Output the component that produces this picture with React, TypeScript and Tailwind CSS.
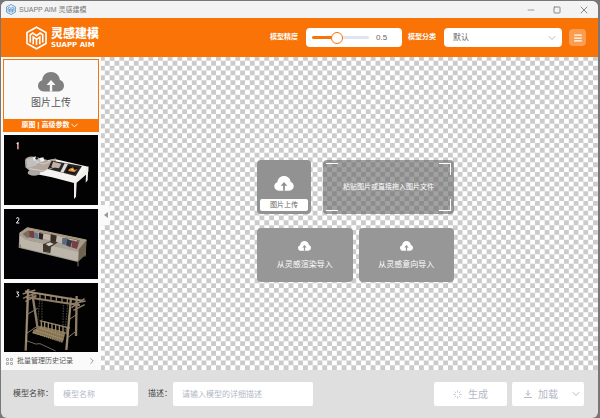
import React from "react";
import { ChevronDown, ChevronRight, Minus, Square, X, Menu } from "lucide-react";

function Cloud({ className, arrow }: { className: string; arrow: string }) {
  return (
    <svg viewBox="0 0 26 20" className={className} aria-hidden="true">
      <path
        d="M6 19.5C2.6 19.5 0 17 0 13.8c0-2.700 1.700-4.800 4.200-5.500C4.400 3.500 8.200 0 13 0c4.700 0 8.500 3.400 8.900 8 2.400.7 4.100 2.900 4.100 5.700 0 3.300-2.600 5.800-6 5.800z"
        fill="currentColor"
      />
      <path d="M13 8l4.500 5h-3.300v6.500h-2.400V13H8.500z" fill={arrow} />
    </svg>
  );
}

function Emblem({ className }: { className: string }) {
  return (
    <svg viewBox="0 0 64 72" className={className} fill="none" stroke="currentColor" strokeWidth="5" aria-hidden="true">
      <path d="M32 3L61 19v34L32 69 3 53V19z" />
      <path d="M13 50V26l8-5 11 8 11-8 8 5v24" />
      <path d="M22 55V33l10 7 10-7v22M32 40v17" />
    </svg>
  );
}

function DayBed() {
  return (
    <svg viewBox="12 3 282 210" className="block w-full" role="img" aria-label="1">
      <rect x="12" y="3" width="282" height="210" fill="#020203" />
      <path d="M50 29l4-2v19" stroke="#f4f4f4" strokeWidth="4" fill="none" />
      <path d="M56 29v17" stroke="#c8312a" strokeWidth="2" />
      <path d="M76 88l20 30 60 12 66 17 43-34v-15l-101-23z" fill="#f5f4f1" />
      <path d="M222 142l43-45-2 42-6 7 1-24-28 24-2 42-6 7z" fill="#efeeeb" />
      <ellipse cx="102" cy="116" rx="19" ry="9" fill="#aaa9a6" />
      <path d="M75 78q4-13 28-10l40 10 14 19-28 17-37-1-16-13z" fill="#aaa6a1" />
      <path d="M80 76l25-7 20 5-20 25-23 2z" fill="#c1c0be" />
      <path d="M84 103l32-12 51-18 2 19-36 16-29 3z" fill="#b4a69b" />
      <path d="M155 80l91 16-19 30-84-21z" fill="#282726" />
      <path d="M159 83l25 6-7 14-23-4z" fill="#c4b0a4" />
      <path d="M194 88l10 2-14 26-9-2z" fill="#deddda" />
      <path d="M204 96l32 5-12 18-27-5z" fill="#130e11" />
      <path d="M207 105l12-5 5 8 9-4-9 11-20-4z" fill="#d98935" />
      <path d="M210 107l9-3 2 6z" fill="#f7d77b" />
      <path d="M98 71l9-4 5 10-10 3zM119 72l11-2 4 11-12 3z" fill="#eeeeed" />
      <circle cx="110" cy="73" r="4" fill="#272321" />
      <path d="M88 104l45 7 31-12M106 82l25 8 20-8" stroke="#e6e3df" strokeWidth="2" fill="none" />
    </svg>
  );
}

function Sofa() {
  return (
    <svg viewBox="12 9 282 210" className="block w-full" role="img" aria-label="2">
      <rect x="12" y="9" width="282" height="210" fill="#020204" />
      <path d="M49 38q1-4 5-3 5 2 2 7l-7 9h9" stroke="#f4f4f4" strokeWidth="3" fill="none" />
      <path d="M58 82l24-17 177 37-2 43-24 23-177-43z" fill="#a39b8e" />
      <path d="M68 83l20-12 152 30-10 28-136-22z" fill="#776c60" />
      <path d="M88 72l30 7v24l-27-6zM122 80l29 6v24l-30-6zM169 88l30 7v23l-31-7zM203 97l27 6v24l-29-7z" fill="#c3b7a9" />
      <path d="M59 88l19 13 156 33v31L60 123z" fill="#bbb5aa" />
      <path d="M70 99l30-8 134 32v15z" fill="#a9a196" />
      <path d="M58 82l24-17 177 37-22 28 20-25-174-36-22 17" fill="none" stroke="#ad9d83" strokeWidth="3" />
      <path d="M87 74l16 2-1 21-13-3z" fill="#773e3b" />
      <path d="M102 79l13 1-1 18-12-2z" fill="#64798a" />
      <path d="M117 81l13 2-2 18-12-3z" fill="#252525" />
      <path d="M187 95l13 2-3 20-11-3z" fill="#526b82" />
      <path d="M201 99l16 5-6 20-13-6z" fill="#353c46" />
      <path d="M217 103l19 6-5 20-17-5z" fill="#793d45" />
      <path d="M153 85l17 4-3 20-15-4z" fill="#352d26" />
      <path d="M129 115l25-11 20 5-21 14-2 19-22-5z" fill="#40362e" />
      <path d="M137 114l13-5 11 5-14 7z" fill="#d4cec1" />
      <path d="M237 130l22-27-1 42-23 21z" fill="#6e6452" />
      <path d="M61 116v9M144 136v8M234 163v18M255 142v10" stroke="#806f5b" strokeWidth="3" />
    </svg>
  );
}

function Swing() {
  return (
    <svg viewBox="12 9 282 207" className="block w-full" role="img" aria-label="3">
      <rect x="12" y="9" width="282" height="207" fill="#020203" />
      <path d="M49 36h7l-4 6q6 0 4 6-2 4-7 2" stroke="#ededed" strokeWidth="3" fill="none" />
      <g stroke="#8d7d66" fill="none">
        <path d="M85 27l-8 185M97 42l18 116M230 48l-2 120M213 53l-14 157" strokeWidth="7" />
        <path d="M75 34l174 28M77 51l163 25" strokeWidth="6" />
        <path d="M68 42l38-12M69 55l39-17M76 65l34-18M215 83l39-27M207 73l50-10M220 91l34-17" strokeWidth="4" />
        <path d="M105 38v17M120 40v20M136 43v19M153 46v17M169 49v18M186 51v18M202 54v18" strokeWidth="4" />
        <path d="M80 160l30-20M202 174l27-21M80 104l33-19M207 119l25-17" strokeWidth="3" />
        <path d="M119 122l91 22M112 139l85 20" strokeWidth="4" />
      </g>
      <path d="M99 151l24-13 74 18-8 29-91-25z" fill="#857353" />
      <path d="M98 157l91 30M107 151l83 27M119 144l74 24" stroke="#a59370" strokeWidth="4" strokeDasharray="4 2" />
      <path d="M124 122v23M134 124v24M145 127v24M156 129v24M167 132v24M178 135v24M189 138v24M201 141v23" stroke="#9a8968" strokeWidth="4" />
      <path d="M119 60l-8 91M126 60v78M190 75l-2 103M203 75l-8 80" stroke="#776f61" strokeWidth="2" strokeDasharray="5 3" />
      <path d="M77 181l30 11 13-1 47 22" stroke="#a49b87" strokeWidth="2" fill="none" />
      <path d="M82 29l-3 160M210 79l-10 126M77 35l163 27" stroke="#b09c7d" strokeWidth="2" fill="none" />
    </svg>
  );
}

function Checker() {
  return (
    <svg className="absolute inset-0 h-full w-full" aria-hidden="true">
      <defs>
        <pattern id="checker" x="-1" y="-1" width="29" height="29" patternUnits="userSpaceOnUse" viewBox="0 0 6 6">
          <rect width="6" height="6" fill="#fff" />
          <path
            fill="#cbcbcb"
            d="M0 0h1v1H0zM2 0h1v1H2zM4 0h1v1H4zM1 1h1v1H1zM3 1h1v1H3zM5 1h1v1H5zM0 2h1v1H0zM2 2h1v1H2zM4 2h1v1H4zM1 3h1v1H1zM3 3h1v1H3zM5 3h1v1H5zM0 4h1v1H0zM2 4h1v1H2zM4 4h1v1H4zM1 5h1v1H1zM3 5h1v1H3zM5 5h1v1H5z"
          />
        </pattern>
      </defs>
      <rect width="100%" height="100%" fill="url(#checker)" />
    </svg>
  );
}

function ImportCard({ text }: { text: string }) {
  return (
    <button className="flex h-[54px] flex-1 flex-col items-center justify-center gap-1.5 rounded bg-[#979797] pt-1 text-[8px] text-white">
      <Cloud className="h-[10px] w-[13px]" arrow="#979797" />
      <span className="leading-4">{text}</span>
    </button>
  );
}

export default function App() {
  return (
    <div className="flex min-h-screen flex-col bg-[#777] pt-px pr-0.5 pl-px font-['Liberation_Sans','Noto_Sans_CJK_SC',sans-serif]">
      <div className="flex flex-1 flex-col overflow-hidden rounded-md bg-[#dfdfdf]">
        <div className="flex h-[17px] items-center bg-[#f3f3f3] pr-2 pl-[5px] text-[#777]">
          <Emblem className="h-[11px] w-[10px] text-[#4388c7]" />
          <h1 className="ml-[3px] flex-1 text-[7px] leading-4">SUAPP AIM 灵感建模</h1>
          <div className="flex items-center gap-[17px] text-[#888]">
            <button aria-label="最小化"><Minus size={10} strokeWidth={2} /></button>
            <button aria-label="最大化"><Square size={8} strokeWidth={3} /></button>
            <button aria-label="关闭"><X size={12} strokeWidth={2} /></button>
          </div>
        </div>

        <header className="flex h-[39px] items-center bg-[#f97306] pr-3 pl-[25px] text-white">
          <Emblem className="h-6 w-[21px]" />
          <div className="ml-1 flex-1">
            <div className="text-[12px] leading-[14px] font-black">灵感建模</div>
            <div className="font-['DejaVu_Sans',sans-serif] text-[7px] leading-[8px] font-bold">SUAPP AIM</div>
          </div>
          <label htmlFor="precision" className="text-[7px] font-bold">模型精度</label>
          <div className="ml-2 flex h-[19px] w-24 items-center rounded-sm bg-white pl-1.5 text-[#666]">
            <input
              id="precision"
              type="range"
              min="0"
              max="1"
              step="0.01"
              defaultValue="0.43"
              className="h-[3px] w-[57px] appearance-none rounded-full bg-[linear-gradient(to_right,#f97306_44%,#e2e5ee_44%)] [&::-webkit-slider-thumb]:size-3 [&::-webkit-slider-thumb]:appearance-none [&::-webkit-slider-thumb]:rounded-full [&::-webkit-slider-thumb]:border [&::-webkit-slider-thumb]:border-[#f97306] [&::-webkit-slider-thumb]:bg-white"
            />
            <output htmlFor="precision" className="ml-[7px] text-[8px]">0.5</output>
          </div>
          <label htmlFor="category" className="ml-1.5 text-[7px] font-bold">模型分类</label>
          <div className="relative ml-2">
            <select id="category" className="block h-[19px] w-[118px] appearance-none rounded-sm bg-white pl-[9px] text-[8px] text-[#666]">
              <option>默认</option>
            </select>
            <ChevronDown size={12} strokeWidth={2} className="pointer-events-none absolute top-1 right-1 text-[#b4b8c2]" />
          </div>
          <button aria-label="菜单" className="ml-[7px] flex size-[17px] items-center justify-center rounded-sm bg-[#fb9d50]">
            <Menu size={10} strokeWidth={3} />
          </button>
        </header>

        <div className="flex flex-1">
          <aside className="flex w-[100px] shrink-0 flex-col bg-[#fafafa] px-0.5 pt-0.5">
            <section className="flex h-[73px] flex-col border border-[#f97306] bg-[#fafafa]">
              <button className="flex flex-1 flex-col items-center pt-3 text-[10px] text-[#555]">
                <Cloud className="h-5 w-[26px] text-[#808080]" arrow="#fafafa" />
                <span className="mt-1 leading-[14px]">图片上传</span>
              </button>
              <button className="flex h-3 items-center justify-center bg-[#f97306] text-[7px] font-bold text-white">
                原图 | 高级参数
                <ChevronDown size={11} />
              </button>
            </section>
            <div className="mt-[3px] flex flex-col gap-1 px-px">
              <DayBed />
              <Sofa />
              <Swing />
            </div>
            <button className="flex flex-1 items-center pr-0.5 pl-[3px] text-[7px] text-[#555]">
              <svg viewBox="0 0 7 7" className="mr-1 size-[7px]" fill="none" stroke="#aaa" aria-hidden="true">
                <path d="M.5.5h2v2h-2zM4.500.5h2v2h-2zM.5 4.500h2v2h-2zM4.500 4.500h2v2h-2z" />
              </svg>
              批量管理历史记录
              <ChevronRight size={10} className="ml-auto text-[#888]" />
            </button>
          </aside>

          <main className="relative flex flex-1 items-center justify-center pt-[15px] pl-3">
            <Checker />
            <button aria-label="收起侧栏" className="absolute top-[148px] left-0 flex h-5 w-[9px] items-center justify-center rounded-r-sm bg-[#fafafa] text-[#999]">
              <svg viewBox="0 0 4 6" className="h-1.5 w-1" aria-hidden="true"><path d="M4 0v6L0 3z" fill="currentColor" /></svg>
            </button>
            <div className="relative flex w-[197px] flex-col gap-3.5">
              <div className="flex justify-between">
                <button className="flex size-[54px] flex-col items-center justify-between rounded bg-[#929292] px-[3px] pt-4 pb-[3px] text-white">
                  <Cloud className="h-[15px] w-5" arrow="#929292" />
                  <span className="w-full rounded-xs bg-white text-[7px] leading-3 text-[#666]">图片上传</span>
                </button>
                <div className="relative flex h-[54px] w-[131px] items-center justify-center rounded bg-[#646464]/60 text-[7px] text-white">
                  <span className="absolute top-[3px] left-[3px] size-3 border-t border-white" />
                  <span className="absolute top-[3px] right-[3px] size-3 border-t border-r border-white" />
                  <span className="absolute bottom-[3px] left-[3px] size-3 border-b border-white" />
                  <span className="absolute right-[3px] bottom-[3px] size-3 border-r border-b border-white" />
                  粘贴图片或直接拖入图片文件
                </div>
              </div>
              <div className="flex gap-1.5">
                <ImportCard text="从灵感渲染导入" />
                <ImportCard text="从灵感意向导入" />
              </div>
            </div>
          </main>
        </div>

        <footer className="flex h-12 items-center pr-3.5 pl-3 text-[8px] text-[#444]">
          <label htmlFor="name" className="w-[41px] whitespace-nowrap">模型名称：</label>
          <input id="name" placeholder="模型名称" className="h-6 w-[84px] rounded-xs bg-white px-[9px] placeholder:text-[#b3b8c6]" />
          <label htmlFor="desc" className="ml-2.5 w-[25px] whitespace-nowrap">描述：</label>
          <input id="desc" placeholder="请输入模型的详细描述" className="h-6 w-[140px] rounded-xs bg-white px-[9px] placeholder:text-[#b3b8c6]" />
          <div className="ml-auto flex gap-[5px] text-[10px] text-[#b3b8c6]">
            <button className="flex h-6 w-[73px] items-center justify-center gap-1.5 rounded-xs bg-white">
              <svg viewBox="0 0 24 24" className="size-[9px]" fill="none" stroke="currentColor" strokeWidth="2" aria-hidden="true">
                <path d="M12 1v6M12 17v6M1 12h6M17 12h6M4 4l4 4M16 16l4 4M4 20l4-4M16 8l4-4" />
              </svg>
              生成
            </button>
            <div className="flex h-6 w-[72px] items-center rounded-xs bg-white pr-0.5 pl-3">
              <button className="flex flex-1 items-center gap-1.5">
                <svg viewBox="0 0 16 16" className="size-2" fill="none" stroke="currentColor" strokeWidth="2" aria-hidden="true">
                  <path d="M8 0v10M4 6l4 5 4-5M0 15h16" />
                </svg>
                加载
              </button>
              <button aria-label="更多"><ChevronDown size={12} /></button>
            </div>
          </div>
        </footer>
      </div>
    </div>
  );
}
